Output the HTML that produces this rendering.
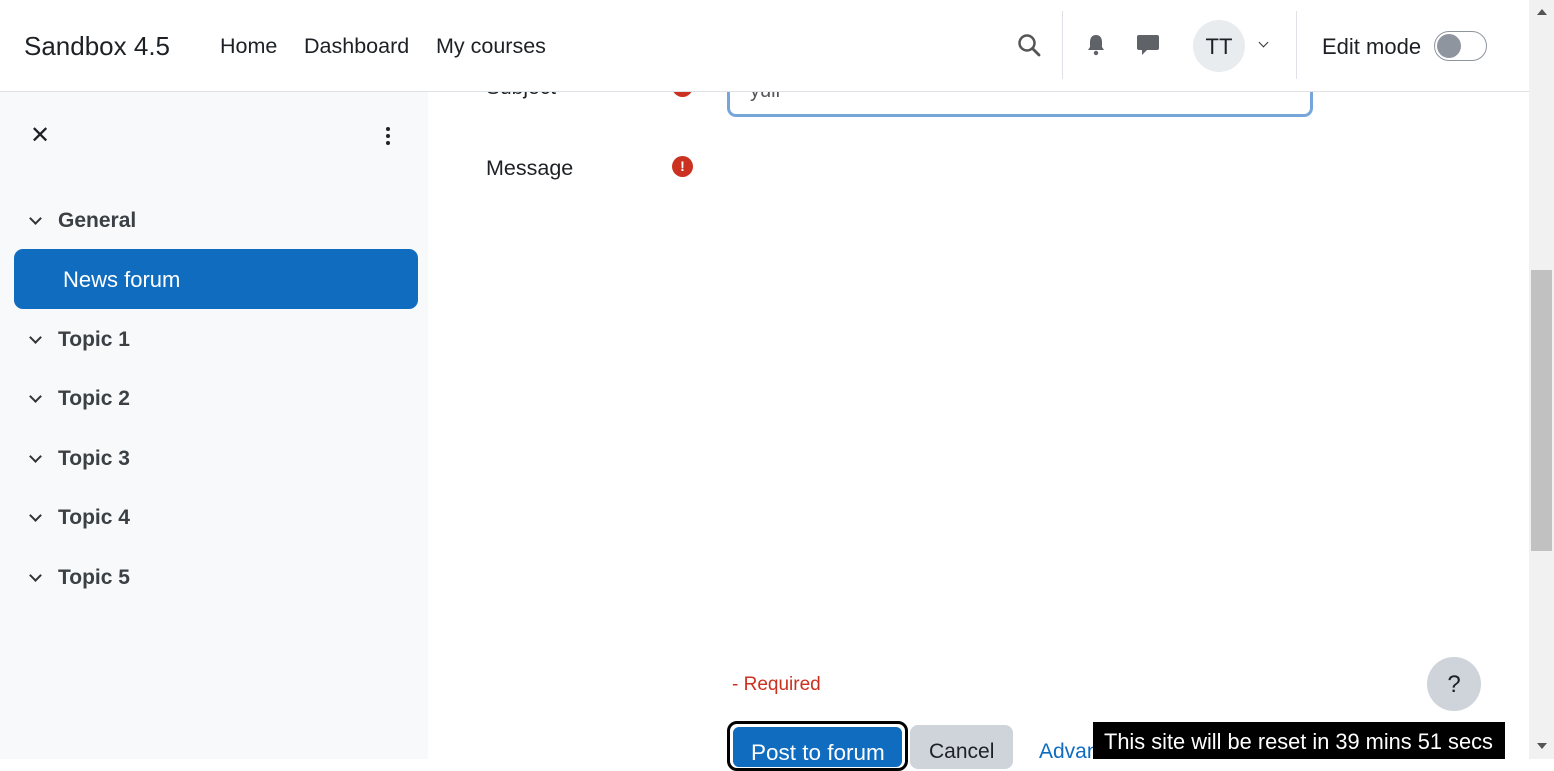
<!DOCTYPE html>
<html><head><meta charset="utf-8"><style>
*{box-sizing:border-box;margin:0;padding:0}
body{width:1554px;height:759px;overflow:hidden;position:relative;background:#fff;font-family:"Liberation Sans",sans-serif;color:#1d2125}
.abs{position:absolute}
.hdr{left:0;top:0;width:1529px;height:92px;background:#fff;border-bottom:1px solid #dee2e6;z-index:2}
.side{left:0;top:92px;width:428px;height:667px;background:#f8f9fa}
.sb{left:1529px;top:0;width:25px;height:759px;background:#f1f1f1}
.t{white-space:nowrap}
.topic{font-weight:bold;font-size:21px;color:#3b4045}
.chev{width:9px;height:9px;border-right:2px solid #333;border-bottom:2px solid #333;transform:rotate(45deg)}
</style></head><body>
<div class="abs hdr">
 <div class="abs t" style="left:24px;top:31px;font-size:26px">Sandbox 4.5</div>
 <div class="abs t" style="left:220px;top:34px;font-size:21.5px">Home</div>
 <div class="abs t" style="left:304px;top:34px;font-size:21.5px">Dashboard</div>
 <div class="abs t" style="left:436px;top:34px;font-size:21.5px">My courses</div>
 <svg class="abs" style="left:1017px;top:33px" width="26" height="26" viewBox="0 0 26 26"><circle cx="10" cy="10" r="7.5" fill="none" stroke="#555" stroke-width="2.5"/><line x1="15.5" y1="15.5" x2="22" y2="22" stroke="#555" stroke-width="2.8" stroke-linecap="round"/></svg>
 <div class="abs" style="left:1062px;top:11px;width:1px;height:68px;background:#dee2e6"></div>
 <svg class="abs" style="left:1085px;top:33px" width="22" height="24" viewBox="0 0 22 24"><path d="M11 2c-4 0-6 3-6 7v5l-2 3h16l-2-3V9c0-4-2-7-6-7z" fill="#5f6368"/><circle cx="11" cy="20" r="2.2" fill="#5f6368"/></svg>
 <svg class="abs" style="left:1136px;top:33px" width="24" height="24" viewBox="0 0 24 24"><path d="M3 2h18a2 2 0 0 1 2 2v11a2 2 0 0 1-2 2H11l-5 5v-5H3a2 2 0 0 1-2-2V4a2 2 0 0 1 2-2z" fill="#5f6368"/></svg>
 <div class="abs" style="left:1193px;top:20px;width:52px;height:52px;border-radius:50%;background:#e9ecef"></div>
 <div class="abs t" style="left:1193px;top:34px;width:52px;text-align:center;font-size:22px">TT</div>
 <div class="abs chev" style="left:1260px;top:39px;width:7px;height:7px;border-width:1.6px"></div>
 <div class="abs" style="left:1296px;top:11px;width:1px;height:68px;background:#dee2e6"></div>
 <div class="abs t" style="left:1322px;top:34px;font-size:22px">Edit mode</div>
 <div class="abs" style="left:1434px;top:31px;width:53px;height:30px;border-radius:15px;border:1px solid #8f959e;background:#fff"></div>
 <div class="abs" style="left:1437px;top:34px;width:24px;height:24px;border-radius:50%;background:#8f959e"></div>
</div>
<div class="abs side">
 <div class="abs t" style="left:30px;top:29px;font-size:24px;color:#1d2125">✕</div>
 <div class="abs" style="left:386px;top:35px;width:4px;height:4px;border-radius:50%;background:#222;box-shadow:0 7px 0 #222,0 14px 0 #222"></div>
 <div class="abs chev" style="left:31px;top:122px"></div><div class="abs t topic" style="left:58px;top:117px">General</div>
 <div class="abs" style="left:14px;top:157px;width:404px;height:60px;border-radius:9px;background:#0f6cbf"></div>
 <div class="abs t" style="left:63px;top:175px;font-size:22px;color:#fff">News forum</div>
 <div class="abs chev" style="left:31px;top:241px"></div><div class="abs t topic" style="left:58px;top:236px">Topic 1</div>
 <div class="abs chev" style="left:31px;top:300px"></div><div class="abs t topic" style="left:58px;top:295px">Topic 2</div>
 <div class="abs chev" style="left:31px;top:360px"></div><div class="abs t topic" style="left:58px;top:355px">Topic 3</div>
 <div class="abs chev" style="left:31px;top:419px"></div><div class="abs t topic" style="left:58px;top:414px">Topic 4</div>
 <div class="abs chev" style="left:31px;top:479px"></div><div class="abs t topic" style="left:58px;top:474px">Topic 5</div>
</div>
<div class="abs" style="left:727px;top:60px;width:586px;height:57px;border:3px solid #76a6d9;border-radius:9px"></div>
<div class="abs t" style="left:750px;top:80px;font-size:20px;color:#555">yuil</div>
<div class="abs t" style="left:486px;top:76px;font-size:21px">Subject</div>
<div class="abs" style="left:672px;top:76px;width:21px;height:21px;border-radius:50%;background:#ca3120"></div>
<div class="abs t" style="left:486px;top:156px;font-size:21.5px">Message</div>
<div class="abs" style="left:672px;top:156px;width:21px;height:21px;border-radius:50%;background:#ca3120;color:#fff;font-size:14px;font-weight:bold;text-align:center;line-height:21px">!</div>
<div class="abs t" style="left:732px;top:674px;font-size:19px;color:#ca3120">- Required</div>
<div class="abs" style="left:1427px;top:657px;width:54px;height:54px;border-radius:50%;background:#ced4da;text-align:center;line-height:56px;font-size:24px">?</div>
<div class="abs" style="left:727px;top:721px;width:181px;height:50px;border:3px solid #000;border-radius:10px;background:#fff"></div>
<div class="abs" style="left:733px;top:727px;width:169px;height:40px;border-radius:6px;background:#0f6cbf"></div>
<div class="abs t" style="left:751px;top:740px;font-size:22.5px;color:#fff">Post to forum</div>
<div class="abs" style="left:910px;top:725px;width:103px;height:44px;border-radius:8px;background:#ced4da"></div>
<div class="abs t" style="left:929px;top:740px;font-size:21px">Cancel</div>
<div class="abs t" style="left:1039px;top:740px;font-size:21px;color:#0f6cbf">Advanced</div>
<div class="abs" style="left:1093px;top:722px;width:412px;height:37px;background:#000"></div>
<div class="abs t" style="left:1104px;top:729px;font-size:21.8px;color:#fff">This site will be reset in 39 mins 51 secs</div>
<div class="abs sb">
 <div class="abs" style="left:2px;top:270px;width:21px;height:281px;background:#c1c1c1"></div>
 <div class="abs" style="left:8px;top:9px;width:0;height:0;border-left:5px solid transparent;border-right:5px solid transparent;border-bottom:6px solid #555"></div>
 <div class="abs" style="left:8px;top:743px;width:0;height:0;border-left:5px solid transparent;border-right:5px solid transparent;border-top:6px solid #555"></div>
</div>
</body></html>
